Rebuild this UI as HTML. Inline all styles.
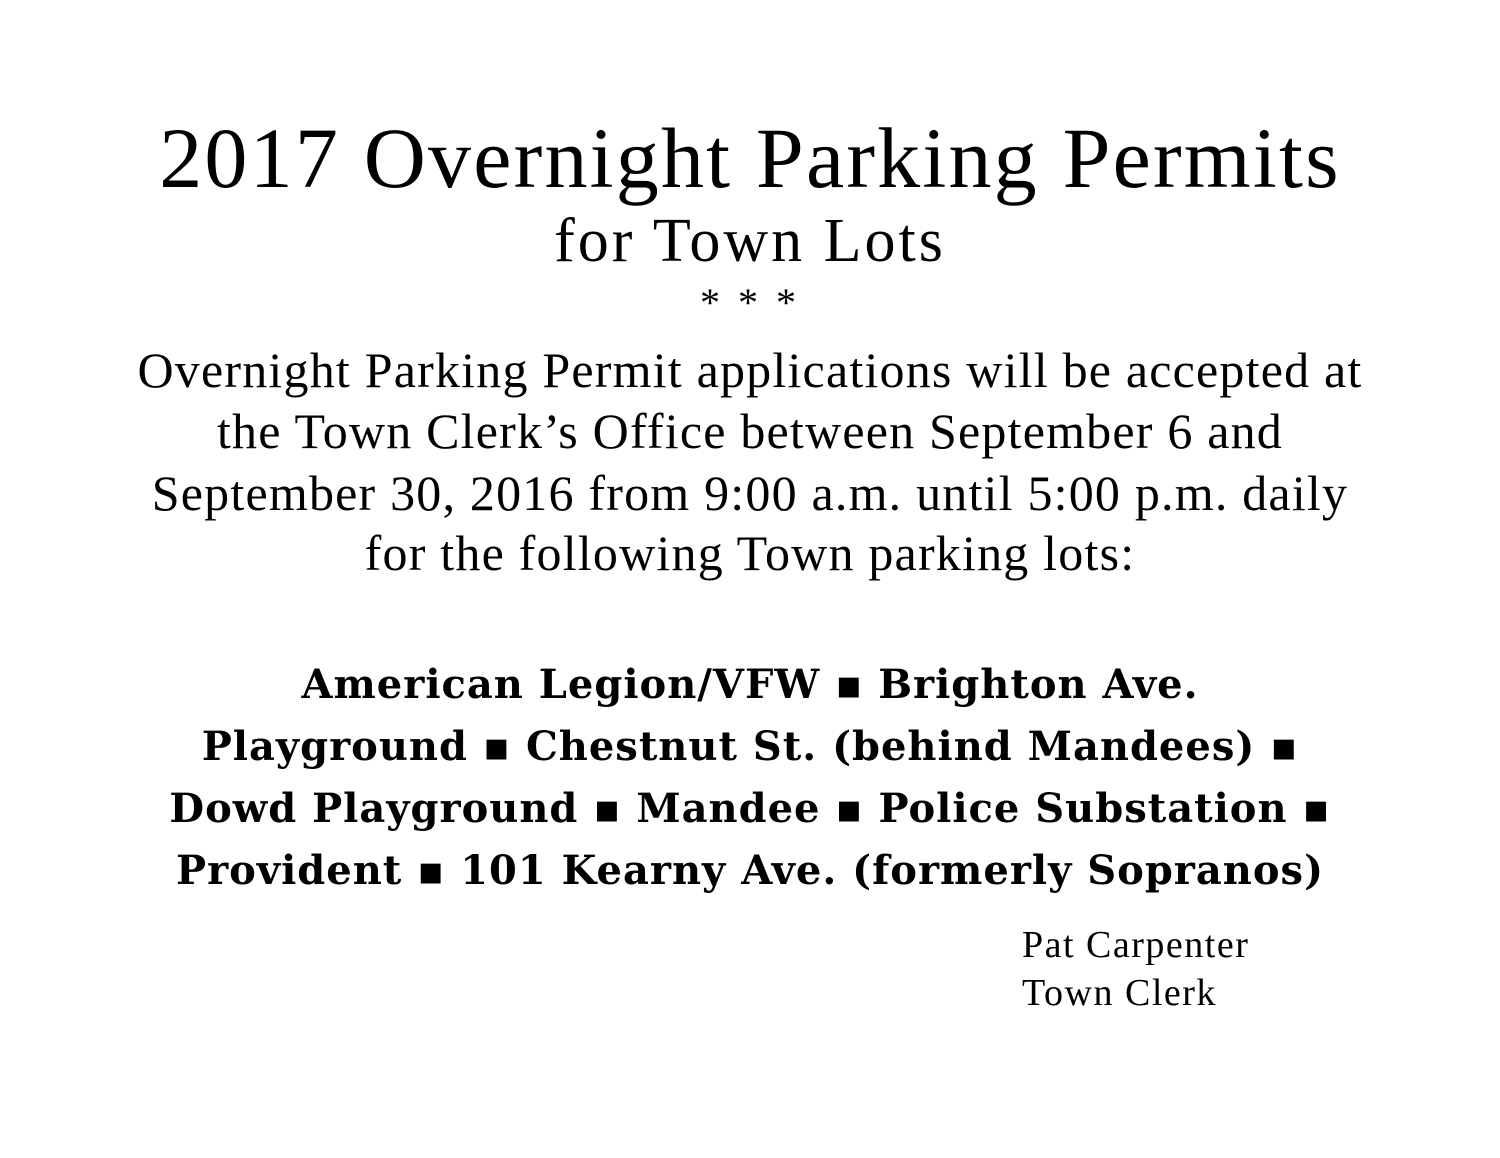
<!DOCTYPE html>
<html><head><meta charset="utf-8"><style>
html,body{margin:0;padding:0;background:#fff;}
body{width:1500px;height:1158px;position:relative;overflow:hidden;color:#000;}
.l{position:absolute;left:0;width:1500px;text-align:center;white-space:nowrap;font-family:"Liberation Serif",serif;}
.b{font-family:"DejaVu Serif","Liberation Serif",serif;font-weight:bold;font-size:40px;letter-spacing:1px;}
.s{position:absolute;left:1022px;font-family:"Liberation Serif",serif;font-size:38px;letter-spacing:1.5px;white-space:nowrap;}
</style></head><body>
<div class="l" style="top:108px;font-size:86px;line-height:100px;letter-spacing:2.2px;">2017 Overnight Parking Permits</div>
<div class="l" style="top:206px;font-size:62px;line-height:70px;letter-spacing:3px;">for Town Lots</div>
<div class="l" style="top:283px;font-size:40px;line-height:40px;letter-spacing:4px;">* * *</div>
<div class="l" style="top:340px;font-size:50px;line-height:60px;letter-spacing:1.2px;">Overnight Parking Permit applications will be accepted at</div>
<div class="l" style="top:401px;font-size:50px;line-height:60px;letter-spacing:1.2px;">the Town Clerk’s Office between September 6 and</div>
<div class="l" style="top:463px;font-size:50px;line-height:60px;letter-spacing:1.2px;">September 30, 2016 from 9:00 a.m. until 5:00 p.m. daily</div>
<div class="l" style="top:523px;font-size:50px;line-height:60px;letter-spacing:1.2px;">for the following Town parking lots:</div>
<div class="l b" style="top:660px;line-height:50px;">American Legion/VFW ▪ Brighton Ave.</div>
<div class="l b" style="top:722px;line-height:50px;">Playground ▪ Chestnut St. (behind Mandees) ▪</div>
<div class="l b" style="top:784px;line-height:50px;">Dowd Playground ▪ Mandee ▪ Police Substation ▪</div>
<div class="l b" style="top:846px;line-height:50px;">Provident ▪ 101 Kearny Ave. (formerly Sopranos)</div>
<div class="s" style="top:925px;line-height:40px;">Pat Carpenter</div>
<div class="s" style="top:973px;line-height:40px;">Town Clerk</div>
</body></html>
